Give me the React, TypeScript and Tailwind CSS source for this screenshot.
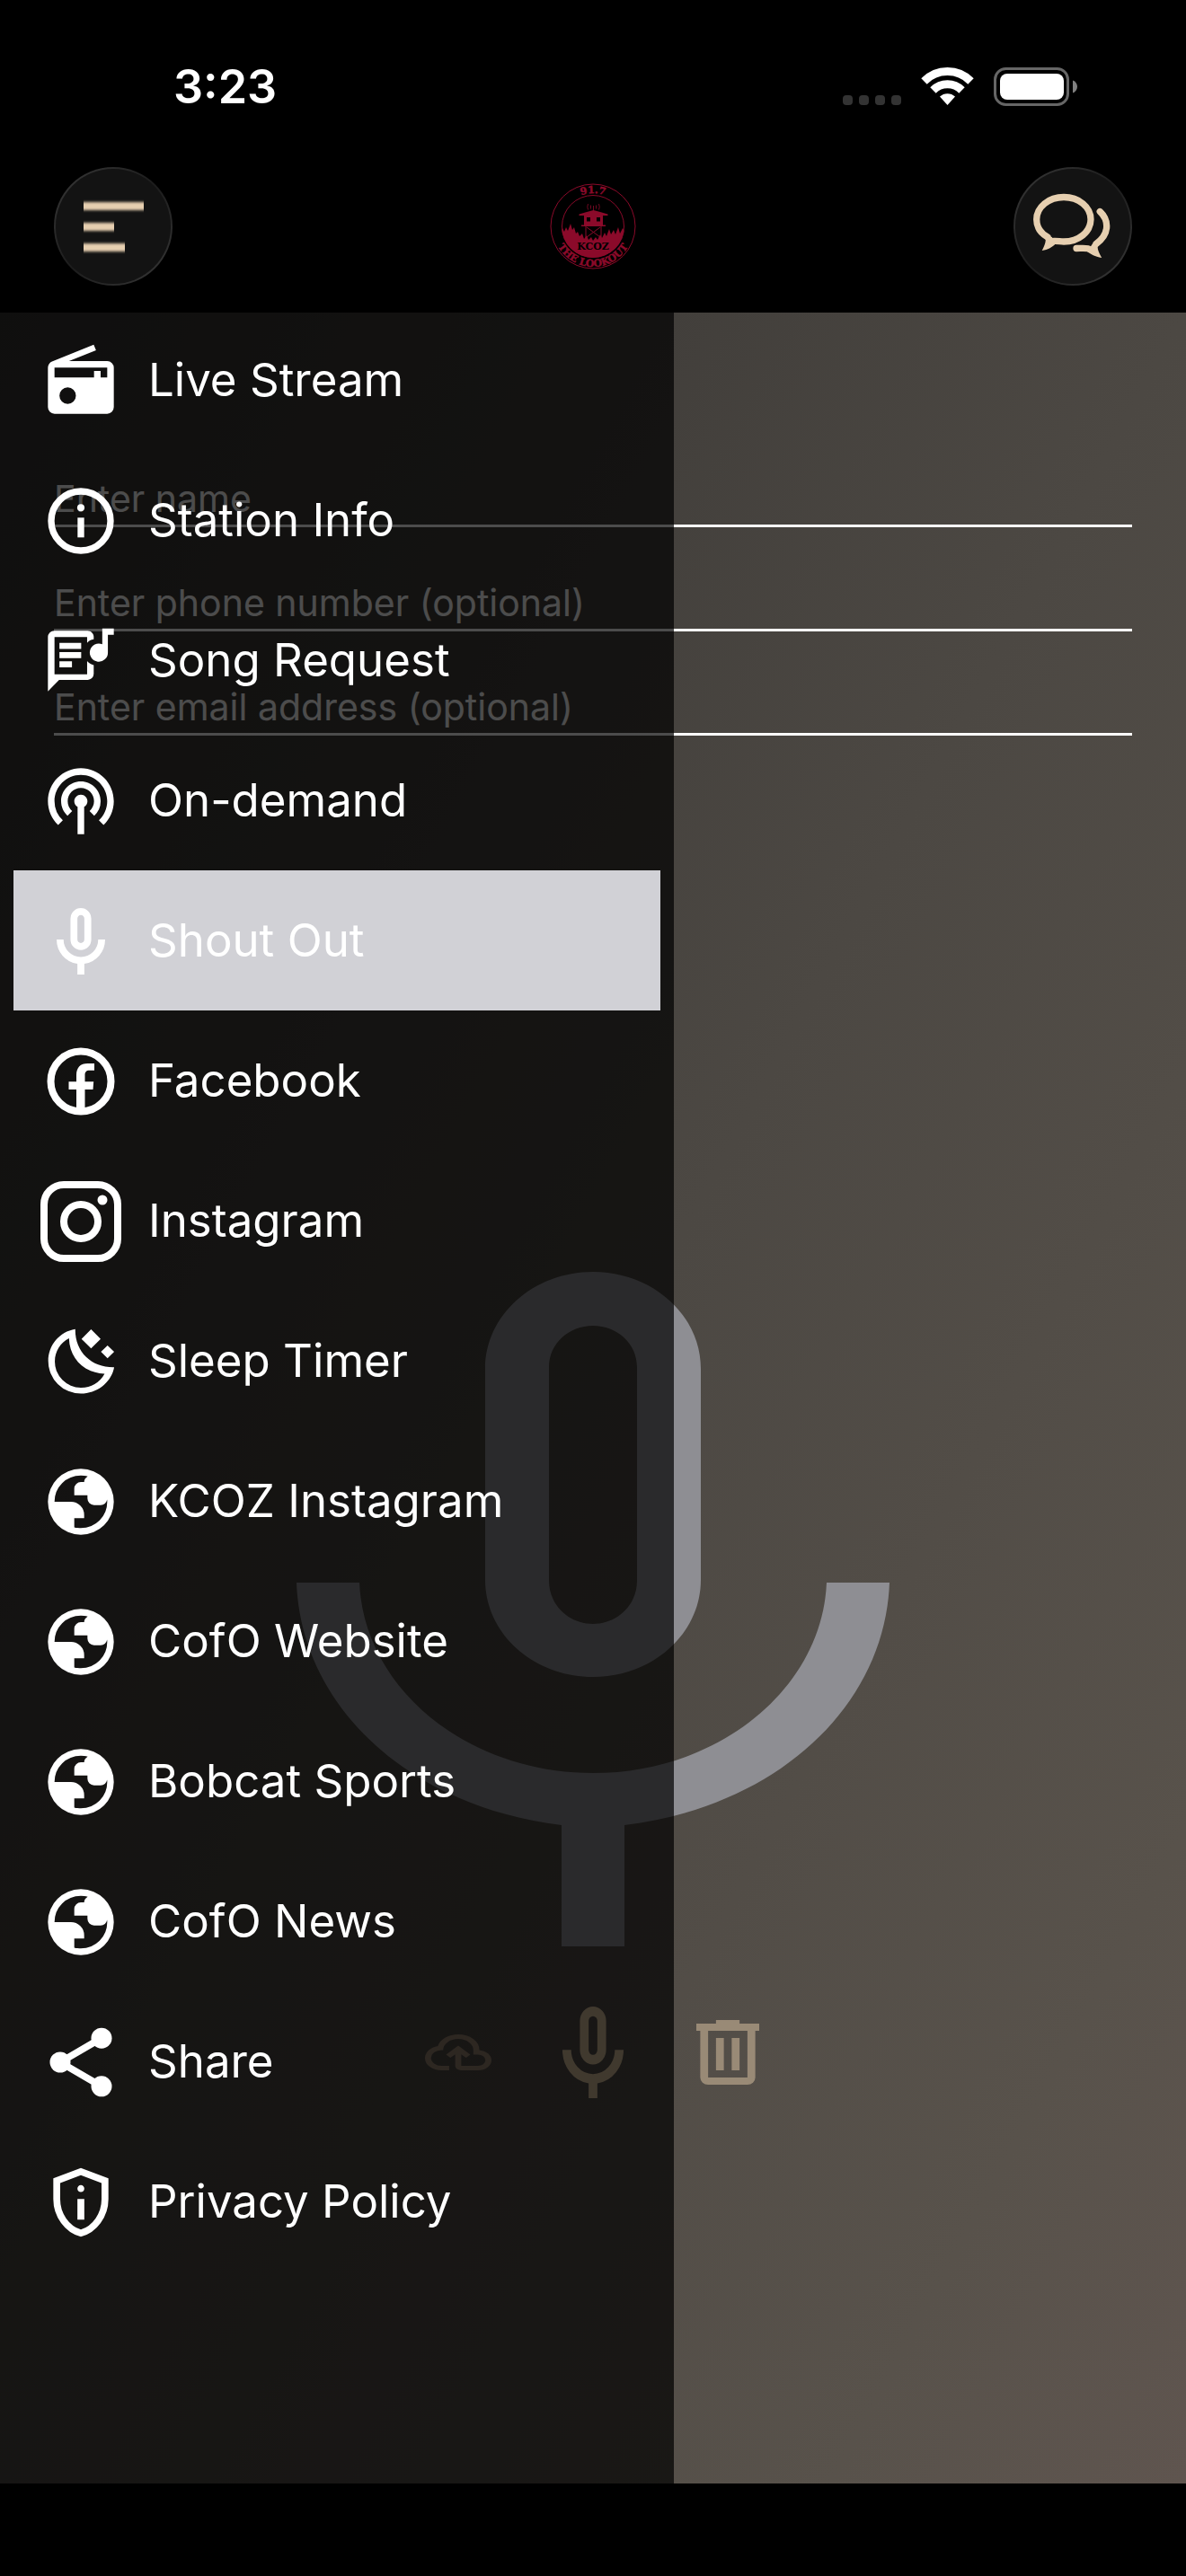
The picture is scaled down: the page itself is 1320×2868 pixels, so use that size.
import React, { useState } from 'react';

type IconProps = { className?: string };

/* ---------- Menu icons ---------- */

const RadioIcon = () => (
  <svg viewBox="0 0 24 24" className="size-[88px]" fill="currentColor" fillRule="evenodd" aria-hidden="true">
    <path d="M3.24 6.15 15.9 1l.7 1.7L8.4 6H20a2 2 0 0 1 2 2v12a2 2 0 0 1-2 2H4a2 2 0 0 1-2-2V8c0-.8.5-1.55 1.24-1.85zM4 8v3h12V9h2v2h2V8zM8 14a2.5 2.5 0 1 0 0 5 2.5 2.5 0 0 0 0-5z" />
  </svg>
);

const InfoIcon = () => (
  <svg viewBox="0 0 24 24" className="size-[88px]" fill="currentColor" aria-hidden="true">
    <circle cx="12" cy="12" r="9" fill="none" stroke="currentColor" strokeWidth="2" />
    <circle cx="12" cy="8" r="1.1" />
    <path d="M11 11h2v6h-2z" />
  </svg>
);

const SongIcon = () => (
  <svg viewBox="0 0 24 24" className="size-[88px]" fill="currentColor" aria-hidden="true">
    <path d="M4 2.8h10c1 0 1.9.8 1.9 1.8v.8c-.9.1-1.5.5-2 1.1V4.7H4V16h9.9v-4c.5.6 1.2 1 2 1.2v2.7a1.8 1.8 0 0 1-1.9 1.8H5.4L2 21.2V4.7c0-1 .9-1.9 2-1.9z" />
    <path d="M5.5 6.5h6.6v1.8H5.5zM5.5 9.3h6.6v1.8H5.5zM5.5 12.1h3.8v1.8H5.5z" />
    <path d="M18.5 2.1H22V4h-1.8v5.4a2.75 2.75 0 1 1-1.7-2.5z" />
  </svg>
);

const PodcastIcon = () => (
  <svg viewBox="0 0 24 24" className="size-[88px]" fill="currentColor" aria-hidden="true">
    <path d="M14 12c0 .74-.4 1.38-1 1.72V22h-2v-8.28c-.6-.35-1-.98-1-1.72 0-1.1.9-2 2-2s2 .9 2 2zm-2-6c-3.31 0-6 2.69-6 6 0 1.74.75 3.31 1.94 4.4l1.42-1.42A3.957 3.957 0 0 1 8 12c0-2.21 1.79-4 4-4s4 1.79 4 4c0 1.19-.53 2.25-1.36 2.98l1.42 1.42A5.957 5.957 0 0 0 18 12c0-3.31-2.69-6-6-6zm0-4C6.48 2 2 6.48 2 12c0 2.85 1.2 5.41 3.11 7.24l1.42-1.42A7.987 7.987 0 0 1 4 12c0-4.41 3.59-8 8-8s8 3.59 8 8c0 2.29-.98 4.36-2.53 5.82l1.42 1.42C20.8 17.41 22 14.85 22 12c0-5.52-4.48-10-10-10z" />
  </svg>
);

const MIC_PATH =
  'M480-400q-50 0-85-35t-35-85v-240q0-50 35-85t85-35q50 0 85 35t35 85v240q0 50-35 85t-85 35Zm-40 280v-123q-104-14-172-93t-68-184h80q0 83 58.5 141.5T480-320q83 0 141.5-58.5T680-520h80q0 105-68 184t-172 93v123h-80Zm40-360q17 0 28.5-11.5T520-520v-240q0-17-11.5-28.5T480-800q-17 0-28.5 11.5T440-760v240q0 17 11.5 28.5T480-480Z';

const MicIcon = ({ className }: IconProps) => (
  <svg viewBox="200 -880 560 760" preserveAspectRatio="none" className={className} fill="currentColor" aria-hidden="true">
    <path d={MIC_PATH} />
  </svg>
);

const FacebookIcon = () => (
  <svg viewBox="0 0 76 76" className="size-[76px]" fill="currentColor" aria-hidden="true">
    <circle cx="38" cy="38" r="33.500" fill="none" stroke="currentColor" strokeWidth="8" />
    <path d="M33 70V47h-8.500v-8.700H33V31c0-8.500 4.500-13 12.500-13H53v7.700h-5.500c-3.700 0-5 2-5 5.300v7.300h9.700L51.500 47h-9v23z" />
  </svg>
);

const InstagramIcon = () => (
  <svg viewBox="0 0 90 90" className="size-[90px]" fill="none" stroke="currentColor" strokeWidth="8" aria-hidden="true">
    <rect x="4" y="4" width="82" height="82" rx="22" />
    <circle cx="45" cy="45" r="19" />
    <circle cx="69" cy="21" r="5.500" fill="currentColor" stroke="none" />
  </svg>
);

const SleepIcon = () => (
  <svg viewBox="0 0 24 24" className="size-[88px]" fill="currentColor" fillRule="evenodd" aria-hidden="true">
    <path d="M10.300 2.100C5.500 2.900 2.100 7 2.100 11.800a9.900 9.900 0 0 0 9.900 9.900c5 0 9.300-3.500 10.100-8-6.800.1-11.900-4.600-11.800-11.600zM8.400 4.900c.2 6.200 4.600 10.500 10.800 10.800a7.950 7.950 0 0 1-7.200 4.200 7.900 7.900 0 0 1-7.900-8c0-3 1.700-5.700 4.300-7z" />
    <path d="m15.100 2.200 2.900 2.900L15.100 8l-2.900-2.900zM20.100 7.100l2 1.900-2 2-2-2z" />
  </svg>
);

const GlobeIcon = () => (
  <svg viewBox="0 -960 960 960" className="size-[88px]" fill="currentColor" aria-hidden="true">
    <path d="M480-80q-83 0-156-31.500T197-197q-54-54-85.500-127T80-480q0-83 31.500-156T197-763q54-54 127-85.500T480-880q83 0 156 31.500T763-763q54 54 85.500 127T880-480q0 83-31.500 156T763-197q-54 54-127 85.500T480-80Zm0-80q134 0 227-93t93-227q0-7-.5-14.500T799-507q-5 29-27 48t-52 19h-80q-33 0-56.500-23.500T560-520v-40H400v-80q0-33 23.500-56.500T480-720h40q0-23 12.500-40.500T563-789q-20-5-40.500-8t-42.500-3q-134 0-227 93t-93 227h200q66 0 113 47t47 113v40H400v110q20 5 39.500 7.500T480-160Z" />
  </svg>
);

const ShareIcon = () => (
  <svg viewBox="0 0 24 24" className="size-[92px]" fill="currentColor" aria-hidden="true">
    <path d="M18 5 6 12l12 7" fill="none" stroke="currentColor" strokeWidth="2" />
    <circle cx="18" cy="5" r="3" />
    <circle cx="6" cy="12" r="3" />
    <circle cx="18" cy="19" r="3" />
  </svg>
);

const PrivacyIcon = () => (
  <svg viewBox="0 -960 960 960" className="size-[92px]" fill="currentColor" aria-hidden="true">
    <path d="M440-280h80v-240h-80v240Zm40-320q17 0 28.500-11.500T520-640q0-17-11.500-28.500T480-680q-17 0-28.500 11.500T440-640q0 17 11.500 28.500T480-600Zm0 520q-139-35-229.500-159.500T160-516v-244l320-120 320 120v244q0 152-90.500 276.500T480-80Zm0-84q104-33 172-132t68-220v-189l-240-90-240 90v189q0 121 68 220t172 132Z" />
  </svg>
);

const menuItems = [
  { name: 'Live Stream', icon: <RadioIcon /> },
  { name: 'Station Info', icon: <InfoIcon /> },
  { name: 'Song Request', icon: <SongIcon /> },
  { name: 'On-demand', icon: <PodcastIcon /> },
  { name: 'Shout Out', icon: <MicIcon className="w-[54px] h-[74px]" /> },
  { name: 'Facebook', icon: <FacebookIcon /> },
  { name: 'Instagram', icon: <InstagramIcon /> },
  { name: 'Sleep Timer', icon: <SleepIcon /> },
  { name: 'KCOZ Instagram', icon: <GlobeIcon /> },
  { name: 'CofO Website', icon: <GlobeIcon /> },
  { name: 'Bobcat Sports', icon: <GlobeIcon /> },
  { name: 'CofO News', icon: <GlobeIcon /> },
  { name: 'Share', icon: <ShareIcon /> },
  { name: 'Privacy Policy', icon: <PrivacyIcon /> },
];

const fields = [
  { id: 'name', label: 'Enter name', type: 'text' },
  { id: 'phone', label: 'Enter phone number (optional)', type: 'tel' },
  { id: 'email', label: 'Enter email address (optional)', type: 'email' },
];

/* ---------- Header ---------- */

function StatusBar() {
  return (
    <div className="flex items-center justify-between h-[186px] pt-2 pl-[193px] pr-[120px]">
      <span className="text-[52px] leading-none font-semibold">3:23</span>
      <svg viewBox="0 0 262 44" className="w-[262px] h-11" aria-hidden="true">
        <g fill="#333">
          <rect x="0" y="31" width="11" height="11" rx="4" />
          <rect x="18" y="31" width="11" height="11" rx="4" />
          <rect x="36" y="31" width="11" height="11" rx="4" />
          <rect x="54" y="31" width="11" height="11" rx="4" />
        </g>
        <g fill="none" stroke="#fff">
          <path d="M90.500 15.500a36.500 36.500 0 0 1 52 0" strokeWidth="9" />
          <path d="M100.500 25.500a22.500 22.500 0 0 1 32 0" strokeWidth="9" />
        </g>
        <path d="M108 32.500a12.500 12.500 0 0 1 17 0L116.500 42z" fill="#fff" />
        <rect x="169.500" y="1.500" width="81" height="40" rx="12" fill="none" stroke="#666" strokeWidth="3" />
        <rect x="175" y="7" width="71" height="29" rx="8" fill="#fff" />
        <path d="M256 14.500c3 1 5 4 5 7s-2 6-5 7z" fill="#808080" />
      </svg>
    </div>
  );
}

function StationLogo() {
  return (
    <svg viewBox="0 0 96 96" className="size-24 text-[#8b0a2a]" role="img" aria-label="91.7 The Lookout KCOZ">
      <defs>
        <path id="logo-top" d="M11 48a37 37 0 0 1 74 0" />
        <path id="logo-bottom" d="M3 48a45 45 0 0 0 90 0" />
        <clipPath id="logo-clip">
          <circle cx="48" cy="48" r="35" />
        </clipPath>
      </defs>
      <circle cx="48" cy="48" r="47" fill="none" stroke="currentColor" strokeWidth="1" />
      <circle cx="48" cy="48" r="34.500" fill="none" stroke="currentColor" strokeWidth="1" />
      <g clipPath="url(#logo-clip)" fill="currentColor">
        <path d="M12 54l2-4 2 4 2-5 2 4 3-8 2 7 2-3 2 7 2-2 2 5 3-3 2 6 3-4 2 5 3-3 2 4 3-4 2 3 3-6 2 4 3-6 2 4 3-8 2 6 3-5 2 5 3-8 2 7 3-6 2 3 3-7 2 8 1-2v36H12z" />
      </g>
      <path d="M32.500 34.500 41 32l7.500-2 7.500 2 8.500 2.500V36H59v11H38V36h-5.500z" fill="currentColor" />
      <path d="M35 46.500h27v1.500H35z" fill="currentColor" />
      <path d="M40 48v13M57 48v13M41 49l15 11M56 49L41 60" stroke="currentColor" fill="none" />
      <path d="M41 38h4v4.500h-4zM52 38h4v4.500h-4z" fill="#000" />
      <path d="M48.500 25v5M45.500 24.500v4M51.500 24.500v4M42.500 23q-1.500 3.500 0 6.500M54.500 23q1.500 3.500 0 6.500" stroke="currentColor" fill="none" strokeWidth=".8" />
      <text x="48" y="74" textAnchor="middle" fontSize="11" fontWeight="bold" fill="#000" fontFamily="DejaVu Serif, serif">KCOZ</text>
      <g fill="currentColor" stroke="currentColor" strokeWidth=".5" fontWeight="bold" textAnchor="middle" fontFamily="DejaVu Serif, serif">
        <text fontSize="11">
          <textPath href="#logo-top" startOffset="50%">91.7</textPath>
        </text>
        <text fontSize="11">
          <textPath href="#logo-bottom" startOffset="50%">THE LOOKOUT</textPath>
        </text>
      </g>
    </svg>
  );
}

function RoundButton({ label, onClick, children }: { label: string; onClick?: () => void; children: React.ReactNode }) {
  return (
    <button
      aria-label={label}
      onClick={onClick}
      className="size-[132px] rounded-full bg-linear-to-br from-[#3a3a3a] via-[#1c1c1c] to-[#3a3a3a] p-[2px] text-[#e6cfb0] cursor-pointer"
    >
      <span className="flex items-center justify-center size-full rounded-full bg-[#131313]">{children}</span>
    </button>
  );
}

function Header({ onMenu }: { onMenu: () => void }) {
  return (
    <header className="relative z-20 bg-black h-[345px] shadow-[0_3px_0_#000]">
      <StatusBar />
      <div className="flex items-center justify-between px-[60px]">
        <RoundButton label="Menu" onClick={onMenu}>
          <svg viewBox="0 0 128 128" className="size-full" fill="currentColor" aria-hidden="true">
            <filter id="soft" x="-10%" y="-60%" width="120%" height="220%">
              <feGaussianBlur stdDeviation="0.6 1.400" />
            </filter>
            <rect x="31" y="37" width="67" height="9" filter="url(#soft)" />
            <rect x="31" y="60" width="34" height="9" filter="url(#soft)" />
            <rect x="31" y="83" width="46" height="9" filter="url(#soft)" />
          </svg>
        </RoundButton>
        <StationLogo />
        <RoundButton label="Messages">
          <svg viewBox="0 0 128 128" className="size-full" fill="none" stroke="currentColor" strokeWidth="7.300" strokeLinecap="round" aria-hidden="true">
            <path d="M36 76c-8-4.500-12.300-11.500-12.300-19.700C23.700 42.500 37.200 31.500 54 31.500s30 11 30 24.800S70.500 81 54 81c-4 0-7-.7-11-.5" />
            <path d="M32.500 74c2.500 5 1 10-2.800 17 7-1 10.500-3.500 14.300-6.800l-3-8.200z" fill="currentColor" stroke="none" />
            <path d="M94.200 47.500C99 52 101.700 57.500 101.700 63.500c0 8-4.200 14.500-11.700 20M68 88.500c5 0 8.500-.7 13 .3" />
            <path d="M93.500 82c-3.500 5-1.500 9 2.700 17-8-1.500-11.700-4-16.200-6.800l6-9z" fill="currentColor" stroke="none" />
          </svg>
        </RoundButton>
      </div>
    </header>
  );
}

/* ---------- Shout out form ---------- */

function ShoutOut() {
  return (
    <div className="flex flex-col flex-1 pt-[126px]">
      <form className="flex flex-col px-[60px]">
        {fields.map((field) => (
          <div key={field.id} className="pt-[57px]">
            <input
              id={field.id}
              type={field.type}
              aria-label={field.label}
              placeholder={field.label}
              className="block w-full h-[59px] border-b-3 border-white text-[41px] placeholder:text-white placeholder:opacity-100 outline-none"
            />
          </div>
        ))}
      </form>

      <svg viewBox="0 0 660 751" className="w-[660px] h-[751px] mt-[597px] mx-auto text-[#8e8e93]" fill="currentColor" fillRule="evenodd" aria-hidden="true">
        <path d="M330 0c66 0 120 48 120 108v235c0 60-54 108-120 108s-120-48-120-108V108C210 48 264 0 330 0zm0 60c-27 0-49 20-49 46v238c0 27 22 48 49 48s49-21 49-48V106c0-26-22-46-49-46z" />
        <path d="M0 346h70c5 118 120 212 260 212s255-94 260-212h70c-5 136-123 249-295 270v135h-70V616C123 595 5 482 0 346z" />
      </svg>

      <div className="flex justify-center items-center mt-[58px]">
        <button aria-label="Upload" className="flex justify-center items-center w-[150px] h-[120px] text-[#968271]">
          <svg viewBox="40 -800 880 640" preserveAspectRatio="none" className="w-[74px] h-10" fill="currentColor" aria-hidden="true">
            <path d="M260-160q-91 0-155.500-63T40-377q0-78 47-139t123-78q25-92 100-149t170-57q117 0 198.500 81.500T760-520q69 8 114.500 59.500T920-340q0 75-52.500 127.500T740-160H520q-33 0-56.500-23.500T440-240v-206l-64 62-56-56 160-160 160 160-56 56-64-62v206h220q42 0 71-29t29-71q0-42-29-71t-71-29h-60v-80q0-83-58.500-141.500T480-720q-83 0-141.500 58.500T280-520h-20q-58 0-99 41t-41 99q0 58 41 99t99 41h100v80H260Z" />
          </svg>
        </button>
        <button aria-label="Record" className="flex justify-center items-center w-[150px] h-[120px] text-[#d8bf9c]">
          <MicIcon className="w-[68px] h-[102px]" />
        </button>
        <button aria-label="Delete" className="flex justify-center items-center w-[150px] h-[120px] text-[#998a76]">
          <svg viewBox="160 -840 640 720" preserveAspectRatio="none" className="w-[70px] h-[72px]" fill="currentColor" aria-hidden="true">
            <path d="M280-120q-33 0-56.500-23.500T200-200v-520h-40v-80h200v-40h240v40h200v80h-40v520q0 33-23.500 56.500T680-120H280Zm400-600H280v520h400v-520ZM360-280h80v-360h-80v360Zm160 0h80v-360h-80v360Z" />
          </svg>
        </button>
      </div>
    </div>
  );
}

function Drawer({ active, onSelect }: { active: string; onSelect: (name: string) => void }) {
  return (
    <nav className="absolute inset-y-0 left-0 z-10 w-[750px] px-[15px] bg-black/70">
      {menuItems.map((item) => (
        <button
          key={item.name}
          onClick={() => onSelect(item.name)}
          className={`flex items-center w-full h-[156px] text-left cursor-pointer ${active === item.name ? 'bg-[#d1d1d6]' : ''}`}
        >
          <span className="flex justify-center w-[150px] pt-[2px]">{item.icon}</span>
          <span className="text-[51px] leading-[52px]">{item.name}</span>
        </button>
      ))}
    </nav>
  );
}

export default function App() {
  const [menuOpen, setMenuOpen] = useState(true);
  const [active, setActive] = useState('Shout Out');

  return (
    <div className="flex flex-col min-h-screen bg-black text-white font-['Inter','Liberation_Sans',sans-serif]">
      <Header onMenu={() => setMenuOpen(!menuOpen)} />
      <main className="relative flex flex-col flex-1 bg-[linear-gradient(to_bottom_right,#353331,#4c4843_50%,#58524b_85%,#5f554f)]">
        <ShoutOut />
        {menuOpen && <Drawer active={active} onSelect={setActive} />}
      </main>
      <footer className="h-[103px] bg-black" />
    </div>
  );
}
